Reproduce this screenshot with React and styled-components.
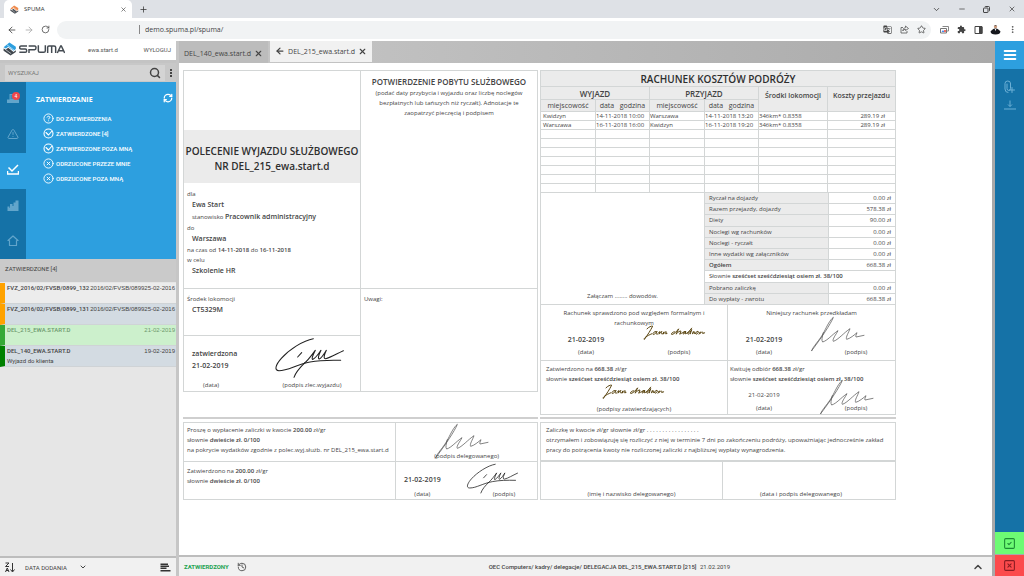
import React from "react";
import styled, { createGlobalStyle } from "styled-components";
import {
  LuArrowLeft, LuArrowRight, LuRotateCw, LuX, LuPlus, LuChevronDown, LuChevronUp, LuMinus,
  LuSearch, LuRefreshCw, LuTriangleAlert, LuStar,
  LuHistory, LuMenu, LuCircleHelp, LuCircleX, LuSquareCheck, LuSquareX,
  LuEllipsisVertical,
} from "react-icons/lu";
import { MdExtension, MdGTranslate } from "react-icons/md";

const Global = createGlobalStyle`
  * { box-sizing: border-box; }
  body { margin: 0; font-family: "Open Sans", "Noto Sans", sans-serif; color: #444; background: #fff; }
  button, input, select { font: inherit; color: inherit; border: 0; padding: 0; margin: 0; background: none; outline: 0; }
  button { cursor: pointer; display: inline-flex; align-items: center; justify-content: center; }
  svg { display: block; flex: none; }
  table { border-collapse: collapse; border-spacing: 0; }
  h1, h2, h3, p { margin: 0; font: inherit; }
`;
const shellFont = `Roboto, "Open Sans", sans-serif`;

const Page = styled.div`
  height: 100vh;
  display: flex;
  flex-direction: column;
  overflow: hidden;
`;

/* ---------- browser frame ---------- */
const TitleBar = styled.div`
  display: flex;
  align-items: center;
  height: 18px;
  padding: 0 4px;
  background: #dee1e6;
  color: #333;
  flex: none;
`;
const BrowserTab = styled.div`
  display: flex;
  align-items: center;
  gap: 5px;
  width: 128px;
  height: 18px;
  padding: 0 5px 0 6px;
  border-radius: 5px 5px 0 0;
  background: #fff;
  font-size: 6px;
  span { flex: 1; }
`;
const NewTab = styled.button`margin-left: 7px;`;
const WindowButtons = styled.div`
  display: flex;
  gap: 16px;
  margin-left: auto;
  padding-right: 4px;
  button { width: 9px; height: 10px; }
`;
const Toolbar = styled.div`
  display: flex;
  align-items: center;
  height: 23px;
  padding: 0 7px;
  gap: 7px;
  background: #fff;
  color: #444;
  flex: none;
`;
const AddressBar = styled.label`
  display: flex;
  align-items: center;
  gap: 8px;
  flex: 1;
  height: 18px;
  padding: 0 5px 0 82px;
  border-radius: 9px;
  background: #f1f3f4;
  i { width: 1px; height: 9px; background: #888; margin-right: -3px; }
  input { flex: 1; font-size: 7px; color: #444; }
`;
const Extensions = styled.div`
  display: flex;
  align-items: center;
  gap: 8px;
  margin-left: 2px;
`;

/* ---------- application shell ---------- */
const Shell = styled.div`
  flex: 1;
  min-height: 0;
  display: flex;
`;
const Sidebar = styled.aside`
  display: flex;
  flex-direction: column;
  width: 179px;
  flex: none;
  border-right: 3px solid #c6c6c6;
  background: #e6e6e6;
  font-family: ${shellFont};
  font-size: 6px;
`;
const Brand = styled.header`
  display: flex;
  align-items: center;
  gap: 2px;
  height: 22px;
  padding: 0 5px 3px 3px;
  background: #fff;
  border-bottom: 3px solid #c4c4c4;
  color: #555;
`;
const BrandName = styled.span`
  margin-left: 21px;
  flex: 1;
`;
const SearchRow = styled.div`
  display: flex;
  align-items: center;
  height: 19px;
  padding: 1px 4px 1px 5px;
  gap: 5px;
  background: #c8c8c8;
  color: #444;
`;
const SearchBox = styled.label`
  flex: 1;
  display: flex;
  align-items: center;
  height: 16px;
  padding: 0 4px 0 3px;
  background: #d4d4d4;
  input { flex: 1; min-width: 0; }
  input::placeholder { color: #777; opacity: 1; }
`;
const NavPanel = styled.nav`
  display: flex;
  background: #2d9fdf;
  color: #fff;
`;
const NavStrip = styled.div`
  width: 26px;
  background: #1572a7;
`;
const StripButton = styled.button`
  position: relative;
  width: 26px;
  height: ${(p) => (p.$tall ? 36 : 35)}px;
  padding-bottom: 3px;
  color: ${(p) => (p.$active ? "#fff" : "#62a5cb")};
  background: ${(p) => (p.$active ? "#2d9fdf" : "transparent")};
`;
const CountBadge = styled.span`
  position: absolute;
  top: 10px;
  right: 6px;
  width: 8px;
  height: 8px;
  border-radius: 4px;
  background: #f0474b;
  color: #fff;
  font-size: 5px;
  line-height: 8px;
`;
const NavBody = styled.div`
  flex: 1;
  padding: 10px 3px 0 10px;
`;
const NavHead = styled.div`
  display: flex;
  justify-content: space-between;
  align-items: center;
  height: 14px;
  margin-bottom: 5px;
  h2 { font-family: "Open Sans", sans-serif; font-size: 7px; font-weight: 700; }
  button { margin-bottom: 3px; }
`;
const NavItem = styled.button`
  display: flex;
  justify-content: flex-start;
  gap: 2px;
  height: 15px;
  margin-left: 7px;
  font-weight: 500;
  white-space: nowrap;
`;
const ListHead = styled.div`
  height: 23px;
  margin-bottom: 1px;
  padding-left: 5px;
  line-height: 20px;
  background: #cacaca;
`;
const ListItem = styled.button`
  display: flex;
  flex-direction: column;
  justify-content: flex-start;
  align-items: stretch;
  width: 100%;
  height: 21px;
  border-left: 5px solid ${(p) => p.$mark};
  border-bottom: 1px solid #cfd3d6;
  padding: 0 1px 0 2px;
  background: ${(p) => p.$bg};
  color: ${(p) => p.$ink || "#444"};
  text-align: left;
  line-height: 10px;
  span { display: flex; justify-content: space-between; white-space: nowrap; }
  b { font-weight: 500; }
  time { font-family: "Liberation Sans", sans-serif; }
  small { font-size: 6px; line-height: 9px; }
`;
const SideFooter = styled.footer`
  display: flex;
  align-items: center;
  height: 20px;
  margin-top: auto;
  padding: 0 5px;
  border-top: 2px solid #bdbdbd;
  background: #f1f1f1;
  color: #444;
`;
const SortField = styled.label`
  display: flex;
  align-items: center;
  margin-left: 9px;
  margin-right: auto;
  select { appearance: none; width: 54px; }
`;

const Main = styled.main`
  flex: 1;
  min-width: 0;
  display: flex;
  flex-direction: column;
  background: #fff;
`;
const TabBar = styled.div`
  display: flex;
  gap: 2px;
  height: 22px;
  flex: none;
  background: linear-gradient(90deg, #c8c8c8, #a9a9a9);
`;
const DocTab = styled.div`
  display: flex;
  align-items: center;
  gap: 3px;
  height: ${(p) => (p.$active ? 21 : 22)}px;
  padding: ${(p) => (p.$active ? "0 5px 1px" : "2px 5px 0")};
  background: ${(p) => (p.$active ? "#f1f1f1" : "#bcbcbc")};
  color: #444;
  font-size: 7px;
  white-space: nowrap;
`;
const DocArea = styled.div`
  flex: 1;
  min-height: 0;
  overflow: hidden;
  padding: 7px 4px;
`;
const StatusBar = styled.footer`
  display: flex;
  align-items: center;
  height: 21px;
  padding: 0 8px 0 5px;
  border-top: 2px solid #bdbdbd;
  background: #f1f1f1;
  font-family: ${shellFont};
  font-size: 6px;
  color: #444;
`;
const StatusName = styled.strong`
  color: #1ea352;
  font-weight: 700;
  margin-right: 8px;
`;
const Crumbs = styled.span`
  flex: 1;
  text-align: center;
  b { font-weight: 500; margin-right: 2px; }
`;
const Rail = styled.aside`
  display: flex;
  flex-direction: column;
  width: 32px;
  flex: none;
  border-left: 3px solid #a9a9a9;
  background: #1572a7;
`;
const RailButton = styled.button`
  height: ${(p) => p.$h}px;
  color: ${(p) => p.$ink};
  background: ${(p) => p.$bg || "transparent"};
`;
const RailTools = styled.div`
  display: flex;
  flex-direction: column;
  padding-top: 9px;
`;
const RailBottom = styled.div`
  display: flex;
  flex-direction: column;
  gap: 1px;
  margin-top: auto;
  background: #a9a9a9;
`;

/* ---------- travel document ---------- */
const line = "1px solid #d3d6d6";
const Sheet = styled.article`
  display: grid;
  grid-template-columns: 356fr 355fr;
  column-gap: 2px;
  max-width: 713px;
  font-size: 6px;
  line-height: 10px;
  b { font-weight: 600; }
`;
const Grid = styled.section`
  display: grid;
  grid-template-columns: ${(p) => p.$cols};
  grid-template-rows: ${(p) => p.$rows};
  border-left: ${line};
  border-top: ${line};
`;
const Cell = styled.div`
  position: relative;
  min-width: 0;
  border-right: ${line};
  border-bottom: ${line};
  padding: ${(p) => p.$pad || "0"};
  text-align: ${(p) => (p.$center ? "center" : "left")};
  grid-row: span ${(p) => p.$span || 1};
`;
const TitleBand = styled.header`
  height: 53px;
  margin-top: 59px;
  padding-top: 14px;
  background: #ebebeb;
  text-align: center;
`;
const Title = styled.h1`
  font-size: 10px;
  font-weight: 600;
  line-height: 15px;
  white-space: nowrap;
  color: #2e2e2e;
`;
const SubTitle = styled.h2`
  font-size: 8px;
  font-weight: 600;
  line-height: 12px;
`;
const DetailBox = styled.div`padding: 6px 0 0 3px;`;
const Label = styled.p`line-height: 10px;`;
const Value = styled.p`
  padding-left: 5px;
  line-height: 11px;
  b { font-size: 7px; }
`;
const SignRow = styled.div`
  display: grid;
  grid-template-columns: ${(p) => p.$cols || "1fr 1fr"};
  justify-content: space-between;
  text-align: center;
  line-height: ${(p) => p.$lh || 13}px;
  b { font-size: 7px; }
`;
const Spacer = styled.div`height: ${(p) => p.$h}px;`;
const Divider = styled.hr`
  width: 100%;
  height: 2px;
  margin: auto 0 3px;
  border: 0;
  background: #cfcfcf;
`;
const Column = styled.div`
  display: flex;
  flex-direction: column;
`;
const CostTable = styled.table`
  width: 100%;
  table-layout: fixed;
  white-space: nowrap;
  th, td { border: ${line}; padding: 0; }
  th { background: #ebebeb; font-weight: 400; text-align: center; }
  td { height: 9px; font-size: 6px; line-height: 8px; text-align: left; }
  td:first-child { padding-left: 2px; }
  td:last-child { text-align: right; padding-right: 10px; }
  tr.title th { height: 16px; font-size: 10px; font-weight: 600; line-height: 14px; color: #2e2e2e; }
  tr.group th { height: 13px; font-size: 8px; font-weight: 600; line-height: 11px; }
  tr.group th[rowspan] { font-size: 7px; padding-bottom: 8px; }
  tr.sub th { height: 12px; font-size: 7px; line-height: 10px; }
`;
const SummaryRow = styled.div`
  display: grid;
  grid-template-columns: 163px 1fr;
  border: ${line};
  border-top: 0;
  border-bottom: 0;
  height: 111px;
`;
const Enclosed = styled.div`
  display: flex;
  align-items: flex-end;
  justify-content: center;
  padding-bottom: 3px;
`;
const SummaryTable = styled.table`
  width: 100%;
  height: 111px;
  table-layout: fixed;
  line-height: 10px;
  th, td { padding: 0 4px; border-bottom: ${line}; border-left: ${line}; }
  th { width: 124px; background: #ebebeb; font-weight: 400; text-align: left; }
  td { text-align: right; }
  td[colspan] { text-align: left; }
  tr:last-child > * { border-bottom: 0; }
`;
const Ink = styled.svg`
  position: absolute;
  left: ${(p) => p.$x}px;
  top: ${(p) => p.$y}px;
  fill: none;
  stroke: ${(p) => p.$color || "#222"};
  stroke-linecap: round;
  stroke-linejoin: round;
  overflow: visible;
`;

/* ---------- drawings ---------- */
function Logo({ size, top, bottom }) {
  return (
    <svg width={size} height={size} viewBox="0 0 24 24" fill="none" strokeLinejoin="round" aria-hidden="true">
      <path d="M11 1 22 8 22 12 18 15 9 8 5 11 1 9Z" fill={top} />
      <path d="M1 11 5 13 9 10 18 17 22 14 22 17 13 23 1 15Z" fill={bottom} />
      <path d="M7 5 19 14M3 12 14 20" stroke="#fff" strokeWidth="1" />
    </svg>
  );
}
function Wordmark() {
  return (
    <svg width="46" height="9" viewBox="0 0 138 27" fill="none" stroke="#444b52" strokeWidth="4.4" aria-label="SPUMA" role="img">
      <path d="M24 3H6Q2 3 2 7.500T6 12H19Q23 12 23 17T19 22H1" />
      <path d="M30 24V14H47Q51 14 51 8.500T47 3H29" />
      <path d="M58 1V17Q58 22 63 22H74Q79 22 79 17V1" />
      <path d="M86 24V7Q86 3 90 3H105Q110 3 110 7V24M98 3V24" />
      <path d="M115 24 125 3H127L137 24M120 17H132" />
    </svg>
  );
}
function CircleChevron() {
  return (
    <svg width="11" height="11" viewBox="0 0 22 22" fill="none" stroke="currentColor" strokeWidth="2.2" strokeLinecap="round" strokeLinejoin="round" aria-hidden="true">
      <circle cx="11" cy="11" r="9" />
      <path d="M6 9 11 14 18 6" />
    </svg>
  );
}
function BossSignature({ x, y, w = 70 }) {
  return (
    <Ink $x={x} $y={y} width={w} height={(w * 125) / 210} viewBox="0 0 210 125" strokeWidth="3.2">
      <path d="M118 5C88 10 45 38 22 64C4 84 0 101 15 101C42 101 68 82 108 75C135 70 165 69 200 70" />
      <path d="M92 78C78 92 66 104 60 121" />
      <path d="M71 60 83 47" />
      <path d="M90 80C104 68 116 50 124 40C117 54 111 68 117 67C126 62 134 49 141 40C135 52 130 66 136 66C145 60 151 49 157 40C151 53 147 65 155 65C170 62 188 50 208 41" />
    </Ink>
  );
}
function DelegateSignature({ x, y }) {
  return (
    <Ink $x={x} $y={y} $color="#555" width="55" height="36" viewBox="0 0 165 108" strokeWidth="2.2">
      <path d="M5 104C8 92 30 72 42 48C52 28 60 12 70 4C62 24 34 66 5 104" />
      <path d="M40 50C36 64 34 74 38 78C52 74 66 56 84 44C78 56 66 70 70 76C84 72 102 50 120 38C116 50 106 64 110 70C120 68 134 56 141 50C139 56 136 60 138 63L162 58" />
    </Ink>
  );
}
function ClerkSignature({ x, y }) {
  return (
    <Ink $x={x} $y={y} $color="#5a4510" width="62" height="17" viewBox="0 0 186 50" strokeWidth="3">
      <path d="M12 14C18 8 25 5 29 6C23 18 14 32 4 46C1 42 12 35 26 29" />
      <path d="M40 22C32 21 27 30 31 31C37 30 40 24 42 22C39 28 39 31 43 30C47 27 49 22 51 22L48 30C52 26 54 22 57 22C53 27 55 31 59 29L63 23 61 30C65 25 69 21 70 23L68 29 72 28" />
      <path d="M95 23C88 22 82 31 87 31C95 29 102 20 107 14L99 30C105 24 111 19 114 21L110 30C116 28 121 22 128 22C121 22 118 30 122 30L128 22 127 29C133 28 140 20 146 12M142 22C135 22 132 30 136 30C141 28 143 22 146 16L142 29M151 22 148 29 155 23C151 28 154 30 158 27M165 22C158 21 156 30 160 30C166 28 168 23 165 22M168 30 172 23 171 28C176 23 181 21 179 28L185 26" />
    </Ink>
  );
}

/* ---------- data ---------- */
const navItems = [
  ["DO ZATWIERDZENIA", LuCircleHelp],
  ["ZATWIERDZONE [4]", CircleChevron],
  ["ZATWIERDZONE POZA MNĄ", CircleChevron],
  ["ODRZUCONE PRZEZE MNIE", LuCircleX],
  ["ODRZUCONE POZA MNĄ", LuCircleX],
];
const docs = [
  { name: "FVZ_2016/02/FVSB/0899_132", meta: "2016/02/FVSB/089925-02-2016", mark: "#ffa200", bg: "#ececec" },
  { name: "FVZ_2016/02/FVSB/0899_131", meta: "2016/02/FVSB/089925-02-2016", mark: "#ffa200", bg: "#d3dbe2" },
  { name: "DEL_215_EWA.START.D", meta: "21-02-2019", mark: "#36a936", bg: "#ccf0cc", ink: "#6e9a6e" },
  { name: "DEL_140_EWA.START.D", meta: "19-02-2019", mark: "#008000", bg: "#d3dbe2", note: "Wyjazd do klienta" },
];
const trips = [
  ["Kwidzyn", "14-11-2018 10:00", "Warszawa", "14-11-2018 13:20", "346km* 0.8358", "289.19 zł"],
  ["Warszawa", "16-11-2018 16:00", "Kwidzyn", "16-11-2018 19:20", "346km* 0.8358", "289.19 zł"],
  ...Array.from({ length: 7 }, () => ["", "", "", "", "", ""]),
];
const sums = [
  ["Ryczał na dojazdy", "0.00 zł"],
  ["Razem przejazdy, dojazdy", "578.38 zł"],
  ["Diety", "90.00 zł"],
  ["Noclegi wg rachunków", "0.00 zł"],
  ["Noclegi - ryczałt", "0.00 zł"],
  ["Inne wydatki wg załączników", "0.00 zł"],
  ["Ogółem", "668.38 zł", true],
  null,
  ["Pobrano zaliczkę", "0.00 zł"],
  ["Do wypłaty - zwrotu", "668.38 zł"],
];

function Browser() {
  return (
    <>
      <TitleBar>
        <BrowserTab>
          <Logo size={9} top="#f08a4b" bottom="#4a4f55" />
          <span>SPUMA</span>
          <button aria-label="Zamknij kartę"><LuX size={7} /></button>
        </BrowserTab>
        <NewTab aria-label="Nowa karta"><LuPlus size={9} /></NewTab>
        <WindowButtons>
          <button aria-label="Szukaj kart"><LuChevronDown size={9} /></button>
          <button aria-label="Minimalizuj"><LuMinus size={8} /></button>
          <button aria-label="Przywróć">
            <svg width="7" height="7" viewBox="0 0 14 14" fill="none" stroke="currentColor" strokeWidth="1.8" aria-hidden="true">
              <path d="M1 5Q1 4 2 4H9Q10 4 10 5V12Q10 13 9 13H2Q1 13 1 12ZM4 2Q4 1 5 1H11Q13 1 13 3V9Q13 10 12 10" />
            </svg>
          </button>
          <button aria-label="Zamknij"><LuX size={8} /></button>
        </WindowButtons>
      </TitleBar>
      <Toolbar>
        <button aria-label="Wstecz"><LuArrowLeft size={10} /></button>
        <button aria-label="Dalej"><LuArrowRight size={10} color="#aaa" /></button>
        <button aria-label="Odśwież"><LuRotateCw size={9} /></button>
        <AddressBar>
          <i />
          <input aria-label="Adres" defaultValue="demo.spuma.pl/spuma/" />
          <Extensions>
            <MdGTranslate size={9} />
            <svg width="9" height="9" viewBox="0 0 18 18" fill="none" stroke="#555" strokeWidth="1.6" strokeLinejoin="round" aria-hidden="true">
              <path d="M6 5H2V16H14V12" /><path d="M11 2 17 7 11 11V8.500Q7 8.500 5.500 12Q6 5.500 11 5Z" />
            </svg>
            <LuStar size={9} />
          </Extensions>
        </AddressBar>
        <Extensions>
          <svg width="9" height="8" viewBox="0 0 18 16" fill="none" strokeWidth="2" aria-hidden="true">
            <path d="M5 1H17V10H14" stroke="#888" />
            <path d="M1 5H13V14H1Z" stroke="#777" />
            <path d="M3 12 6 8 9 12" fill="#4285f4" /><circle cx="10" cy="10" r="2" fill="#ea4335" />
          </svg>
          <MdExtension size={9} />
          <svg width="9" height="8" viewBox="0 0 18 16" fill="none" stroke="#444" strokeWidth="2" aria-hidden="true">
            <path d="M2 1H16V15H2Z" /><path d="M11 2H16V15H11Z" fill="#444" />
          </svg>
          <svg width="9" height="11" viewBox="0 0 22 24" overflow="visible" aria-hidden="true">
            <circle cx="11" cy="5" r="4" fill="#c9997c" />
            <path d="M7 4Q11-2 15 4L14 3H8Z" fill="#444" />
            <path d="M-1 16Q6 9 11 9T23 16Q23 24 11 24T-1 16Z" fill="#15171c" />
            <path d="M9 10H13L11 16Z" fill="#fff" />
          </svg>
          <LuEllipsisVertical size={9} />
        </Extensions>
      </Toolbar>
    </>
  );
}

function Side() {
  return (
    <Sidebar>
      <Brand>
        <Logo size={14} top="#2d9fdf" bottom="#40474e" />
        <Wordmark />
        <BrandName>ewa.start.d</BrandName>
        <button>WYLOGUJ</button>
      </Brand>
      <SearchRow>
        <SearchBox>
          <input aria-label="Wyszukaj" placeholder="WYSZUKAJ" />
          <LuSearch size={12} strokeWidth={3} />
        </SearchBox>
        <button aria-label="Więcej">
          <svg width="2" height="8" viewBox="0 0 2 8" fill="#444" aria-hidden="true">
            <path d="M0 0H2V2H0ZM0 3H2V5H0ZM0 6H2V8H0Z" />
          </svg>
        </button>
      </SearchRow>
      <NavPanel>
        <NavStrip>
          <StripButton $tall aria-label="Skrzynka">
            <svg width="12" height="11" viewBox="0 0 24 22" fill="currentColor" aria-hidden="true">
              <path d="M5 2H19V13H24V20H0V13H5ZM7 5V7H17V5ZM7 9V11H17V9Z" />
            </svg>
            <CountBadge>4</CountBadge>
          </StripButton>
          <StripButton aria-label="Ostrzeżenia"><LuTriangleAlert size={12} strokeWidth={2} /></StripButton>
          <StripButton $tall $active aria-label="Zatwierdzanie">
            <svg width="12" height="11" viewBox="0 0 24 22" fill="none" stroke="currentColor" strokeWidth="3" aria-hidden="true">
              <path d="M1 14V20H23V14" /><path d="M3 7 10 14 22 2" />
            </svg>
          </StripButton>
          <StripButton aria-label="Raporty">
            <svg width="12" height="11" viewBox="0 0 24 22" fill="currentColor" aria-hidden="true">
              <path d="M1 13H5V16H6V8H11V12H13V5H17V1H23V22H1Z" />
            </svg>
          </StripButton>
          <StripButton aria-label="Start">
            <svg width="12" height="11" viewBox="0 0 24 22" fill="none" stroke="currentColor" strokeWidth="2.4" strokeLinejoin="round" aria-hidden="true">
              <path d="M2 11 12 2 22 11H19V21H5V11Z" />
            </svg>
          </StripButton>
        </NavStrip>
        <NavBody>
          <NavHead>
            <h2>ZATWIERDZANIE</h2>
            <button aria-label="Odśwież listę"><LuRefreshCw size={10} strokeWidth={3} /></button>
          </NavHead>
          {navItems.map(([text, Icon]) => (
            <NavItem key={text}><Icon size={11} strokeWidth={2} />{text}</NavItem>
          ))}
        </NavBody>
      </NavPanel>
      <ListHead>ZATWIERDZONE [4]</ListHead>
      {docs.map((d) => (
        <ListItem key={d.name} $mark={d.mark} $bg={d.bg} $ink={d.ink}>
          <span><b>{d.name}</b><time>{d.meta}</time></span>
          {d.note && <small>{d.note}</small>}
        </ListItem>
      ))}
      <SideFooter>
        <svg width="11" height="11" viewBox="0 0 22 22" fill="none" stroke="#333" strokeWidth="2" aria-hidden="true">
          <path d="M1 2H8L1 9H8M1 20 4.500 12 8 20M2 17H7M15 2V19M11 15 15 20 19 15" />
        </svg>
        <SortField>
          <select aria-label="Sortowanie"><option>DATA DODANIA</option></select>
          <LuChevronDown size={8} strokeWidth={3} />
        </SortField>
        <svg width="11" height="9" viewBox="0 0 22 18" fill="#333" aria-hidden="true">
          <path d="M1 1H16V4H1ZM1 5H18V8H1ZM1 9H13V12H1ZM1 14H21V17H1Z" />
        </svg>
      </SideFooter>
    </Sidebar>
  );
}

function Details() {
  return (
    <DetailBox>
      <Label>dla</Label>
      <Value><b>Ewa Start</b></Value>
      <Value>stanowisko <b>Pracownik administracyjny</b></Value>
      <Label>do</Label>
      <Value><b>Warszawa</b></Value>
      <Label>na czas od <b>14-11-2018</b> do <b>16-11-2018</b></Label>
      <Label>w celu</Label>
      <Value><b>Szkolenie HR</b></Value>
    </DetailBox>
  );
}

function OrderForm() {
  return (
    <Column>
      <Grid $cols="1fr 1fr" $rows="218px 47px 56px">
        <Cell>
          <TitleBand>
            <Title>POLECENIE WYJAZDU SŁUŻBOWEGO<br />NR DEL_215_ewa.start.d</Title>
          </TitleBand>
          <Details />
        </Cell>
        <Cell $center $pad="5px 8px">
          <SubTitle>POTWIERDZENIE POBYTU SŁUŻBOWEGO</SubTitle>
          <p>(podać daty przybycia i wyjazdu oraz liczbę noclegów<br />bezpłatnych lub tańszych niż ryczałt). Adnotacje te<br />zaopatrzyć pieczęcią i podpisem</p>
        </Cell>
        <Cell $pad="5px 3px">
          <Label>Środek lokomocji</Label>
          <Value><b>CT5329M</b></Value>
        </Cell>
        <Cell $span={2} $pad="5px 3px">Uwagi:</Cell>
        <Cell $pad="12px 3px 0">
          <Value><b>zatwierdzona</b></Value>
          <Value><b>21-02-2019</b></Value>
          <Spacer $h={8} />
          <SignRow $cols="48px 90px" $lh={10}><span>(data)</span><span>(podpis zlec.wyjazdu)</span></SignRow>
          <BossSignature x={90} y={1} />
        </Cell>
      </Grid>
      <Divider />
      <Grid $cols="3fr 2fr" $rows="39px 38px">
        <Cell $pad="2px 3px">
          Proszę o wypłacenie zaliczki w kwocie <b>200.00</b> zł/gr<br />
          słownie <b>dwieście zł. 0/100</b><br />
          na pokrycie wydatków zgodnie z polec.wyj.służb. nr DEL_215_ewa.start.d
        </Cell>
        <Cell $center $pad="28px 0 0">
          (podpis delegowanego)
          <DelegateSignature x={38} y={0} />
        </Cell>
        <Cell $pad="4px 3px">
          Zatwierdzono na <b>200.00</b> zł/gr<br />
          słownie <b>dwieście zł. 0/100</b>
        </Cell>
        <Cell $pad="10px 0 0">
          <SignRow $cols="52px 66px" $lh={15}><b>21-02-2019</b><span /><span>(data)</span><span>(podpis)</span></SignRow>
          <BossSignature x={70} y={1} w={52} />
        </Cell>
      </Grid>
    </Column>
  );
}

function CostForm() {
  return (
    <Column>
      <CostTable>
        <colgroup>
          <col width="55" /><col width="54" /><col width="55" /><col width="54" /><col width="69" /><col width="68" />
        </colgroup>
        <thead>
          <tr className="title"><th colSpan={6}>RACHUNEK KOSZTÓW PODRÓŻY</th></tr>
          <tr className="group">
            <th colSpan={2}>WYJAZD</th><th colSpan={2}>PRZYJAZD</th>
            <th rowSpan={2}>Środki lokomocji</th><th rowSpan={2}>Koszty przejazdu</th>
          </tr>
          <tr className="sub">
            <th>miejscowość</th><th>data &nbsp; godzina</th><th>miejscowość</th><th>data &nbsp; godzina</th>
          </tr>
        </thead>
        <tbody>
          {trips.map((row, i) => <tr key={i}>{row.map((c, j) => <td key={j}>{c}</td>)}</tr>)}
        </tbody>
      </CostTable>
      <SummaryRow>
        <Enclosed>Załączam ........ dowodów.</Enclosed>
        <SummaryTable>
          <tbody>
            {sums.map((s, i) =>
              s ? (
                <tr key={i}><th scope="row">{s[2] ? <b>{s[0]}</b> : s[0]}</th><td>{s[1]}</td></tr>
              ) : (
                <tr key={i}><td colSpan={2}>Słownie <b>sześćset sześćdziesiąt osiem zł. 38/100</b></td></tr>
              )
            )}
          </tbody>
        </SummaryTable>
      </SummaryRow>
      <Grid $cols="187px 1fr" $rows="56px 54px">
        <Cell $center $pad="3px 0 0">
          Rachunek sprawdzono pod względem formalnym i<br />rachunkowym
          <Spacer $h={5} />
          <SignRow $cols="90px 1fr"><b>21-02-2019</b><span /><span>(data)</span><span>(podpis)</span></SignRow>
          <ClerkSignature x={102} y={19} />
        </Cell>
        <Cell $center $pad="3px 0 0">
          Niniejszy rachunek przedkładam
          <Spacer $h={15} />
          <SignRow $cols="72px 78px"><b>21-02-2019</b><span /><span>(data)</span><span>(podpis)</span></SignRow>
          <DelegateSignature x={82} y={11} />
        </Cell>
        <Cell $pad="3px 5px 0">
          Zatwierdzono na <b>668.38</b> zł/gr<br />
          słownie <b>sześćset sześćdziesiąt osiem zł. 38/100</b>
          <Spacer $h={20} />
          <SignRow $cols="1fr" $lh={10}>(podpisy zatwierdzających)</SignRow>
          <ClerkSignature x={61} y={22} />
        </Cell>
        <Cell $pad="3px 0 0 2px">
          Kwituję odbiór <b>668.38</b> zł/gr<br />
          słownie <b>sześćset sześćdziesiąt osiem zł. 38/100</b>
          <Spacer $h={5} />
          <SignRow $cols="68px 78px"><span>21-02-2019</span><span /><span>(data)</span><span>(podpis)</span></SignRow>
          <DelegateSignature x={91} y={18} />
        </Cell>
      </Grid>
      <Spacer $h={2} />
      <Divider />
      <Grid $cols="1fr" $rows="38px">
        <Cell $pad="2px 5px">
          Zaliczkę w kwocie zł/gr słownie zł/gr . . . . . . . . . . . . . . . . .<br />
          otrzymałem i zobowiązuję się rozliczyć z niej w terminie 7 dni po zakończeniu podróży, upoważniając jednocześnie zakład pracy do potrącenia kwoty nie rozliczonej zaliczki z najbliższej wypłaty wynagrodzenia.
        </Cell>
      </Grid>
      <Grid $cols="182px 1fr" $rows="38px">
        <Cell $center $pad="27px 0 0">(imię i nazwisko delegowanego)</Cell>
        <Cell $center $pad="27px 16px 0 0">(data i podpis delegowanego)</Cell>
      </Grid>
    </Column>
  );
}

export default function App() {
  return (
    <Page>
      <Global />
      <Browser />
      <Shell>
        <Side />
        <Main>
          <TabBar>
            <DocTab><span>DEL_140_ewa.start.d</span><button aria-label="Zamknij DEL_140"><LuX size={9} strokeWidth={3} /></button></DocTab>
            <DocTab $active>
              <LuArrowLeft size={10} strokeWidth={3} />
              <span>DEL_215_ewa.start.d</span>
              <button aria-label="Zamknij DEL_215"><LuX size={9} strokeWidth={3} /></button>
            </DocTab>
          </TabBar>
          <DocArea>
            <Sheet>
              <OrderForm />
              <CostForm />
            </Sheet>
          </DocArea>
          <StatusBar>
            <StatusName>ZATWIERDZONY</StatusName>
            <button aria-label="Historia"><LuHistory size={10} /></button>
            <Crumbs><b>OEC Computers/ kadry/ delegacje/ DELEGACJA DEL_215_EWA.START.D [215]</b> 21.02.2019</Crumbs>
            <button aria-label="Rozwiń"><LuChevronUp size={12} strokeWidth={3} /></button>
          </StatusBar>
        </Main>
        <Rail>
          <RailButton $h={28} $bg="#2d9fdf" $ink="#fff" aria-label="Menu"><LuMenu size={16} strokeWidth={3} /></RailButton>
          <RailTools>
            <RailButton $h={18} $ink="#6db0d6" aria-label="Załącz">
              <svg width="11" height="14" viewBox="0 0 22 28" fill="none" stroke="currentColor" strokeWidth="2" strokeLinecap="round" aria-hidden="true">
                <path d="M13 13V7Q13 2 7.500 2T2 7V18Q2 25 8 25M13 7V17Q13 21 9.500 21T6 17V8" />
                <path d="M16 15V25M11 20H21" />
              </svg>
            </RailButton>
            <RailButton $h={18} $ink="#6db0d6" aria-label="Pobierz">
              <svg width="12" height="10" viewBox="0 0 24 20" fill="none" stroke="currentColor" strokeWidth="2" aria-hidden="true">
                <path d="M12 1V13M8 9 12 13 16 9M0 18H24" />
              </svg>
            </RailButton>
          </RailTools>
          <RailBottom>
            <RailButton $h={22} $bg="#6dfb74" $ink="#1d8a35" aria-label="Zatwierdź"><LuSquareCheck size={13} /></RailButton>
            <RailButton $h={21} $bg="#fc4a4c" $ink="#8a1c22" aria-label="Odrzuć"><LuSquareX size={13} /></RailButton>
          </RailBottom>
        </Rail>
      </Shell>
    </Page>
  );
}
